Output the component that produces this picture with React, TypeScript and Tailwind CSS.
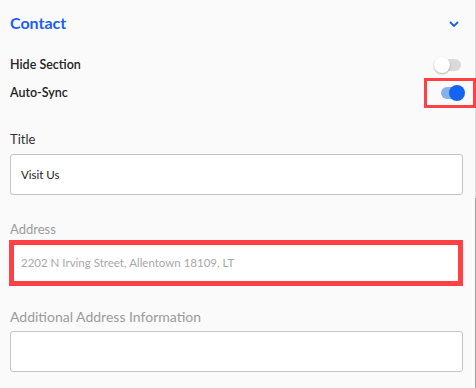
import { useState } from 'react'

function Toggle({ on, onChange }: { on: boolean; onChange: () => void }) {
  return (
    <button
      onClick={onChange}
      className="relative w-[28px] h-[16px] flex items-center"
      title={on ? 'On' : 'Off'}
    >
      <span
        className={`absolute left-[4px] right-[1px] h-[12px] rounded-full ${on ? 'bg-[#86b2ea]' : 'bg-[#dadada]'}`}
      />
      <span
        className={`absolute w-[16px] h-[16px] rounded-full ${
          on ? 'left-[12px] bg-[#1463f3]' : 'left-0 bg-white shadow-[0_1px_2px_rgba(0,0,0,0.3)]'
        }`}
      />
    </button>
  )
}

export default function App() {
  const [hidden, setHidden] = useState(false)
  const [sync, setSync] = useState(true)
  const [title, setTitle] = useState('Visit Us')
  const [extra, setExtra] = useState('')

  return (
    <div className="w-[476px] h-[388px] flex bg-[#fafafa] overflow-hidden" style={{ fontFamily: 'Lato, "Noto Sans", sans-serif' }}>
      <div className="flex-1 flex flex-col pl-[10px] pr-[12px]">
        <div className="h-[46px] flex items-center justify-between">
          <h2 className="text-[16px] font-bold text-[#1b5ef0]">Contact</h2>
          <svg width="10" height="6" viewBox="0 0 10 6" className="mr-[4px] mt-[2px]">
            <path d="M1 1l4 4 4-4" fill="none" stroke="#1b5ef0" strokeWidth="1.8" />
          </svg>
        </div>

        <div className="mt-[9px] h-[20px] flex items-center justify-between">
          <span className="text-[12.5px] font-semibold text-[#222]">Hide Section</span>
          <div className="mr-[1px]">
            <Toggle on={hidden} onChange={() => setHidden(!hidden)} />
          </div>
        </div>

        <div className="mt-[8px] h-[20px] flex items-center justify-between">
          <span className="text-[12.5px] font-semibold text-[#222]">Auto-Sync</span>
          <div className="border-[3px] border-[#ff4045] w-[52px] h-[30px] flex items-center pl-[10px] -mr-[13px] relative z-10">
            <Toggle on={sync} onChange={() => setSync(!sync)} />
          </div>
        </div>

        <label className="mt-[27px] text-[13px] text-[#333]">Title</label>
        <input
          value={title}
          onChange={e => setTitle(e.target.value)}
          className="mt-[4px] h-[41px] w-full bg-white border border-[#c4c4c4] rounded-[3px] px-[10px] text-[11.5px] text-[#222] outline-none"
        />

        <label className="mt-[25px] text-[13px] text-[#9a9a9a]">Address</label>
        <div className="mt-[1px] -ml-[1px] w-[454px] h-[46px] border-[5px] border-[#ff4045] bg-white flex items-center px-[7px]">
          <span className="text-[11.5px] text-[#a8a8a8]">2202 N Irving Street, Allentown 18109, LT</span>
        </div>

        <label className="mt-[20px] text-[14px] text-[#9a9a9a]">Additional Address Information</label>
        <input
          value={extra}
          onChange={e => setExtra(e.target.value)}
          className="mt-[4px] h-[41px] w-full bg-white border border-[#c4c4c4] rounded-[3px] px-[10px] text-[11.5px] text-[#222] outline-none"
        />
      </div>

      <div className="w-[4px] flex flex-col bg-[#dcdcdc]">
        <div className="h-[198px]" />
        <div className="flex-1 bg-[#a3a3a3]" />
      </div>
    </div>
  )
}
